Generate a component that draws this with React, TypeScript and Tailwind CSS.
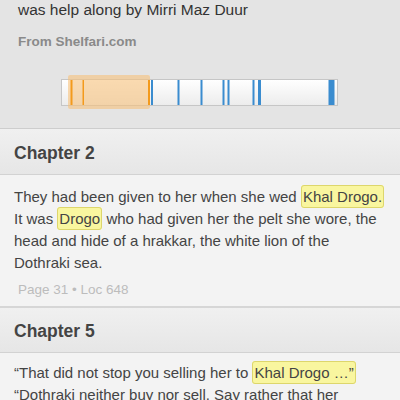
const Mark = ({ children }: { children: React.ReactNode }) => (
  <span className="rounded-[3px] border border-[#ddd66c] bg-[#f9f69f] px-[1px] py-[2px]">
    {children}
  </span>
);

function ProgressBar() {
  const blue = [
    { x: 93, w: 2 },
    { x: 119.5, w: 2 },
    { x: 142.5, w: 2 },
    { x: 164.5, w: 2 },
    { x: 169.5, w: 2 },
    { x: 194.5, w: 2 },
    { x: 200, w: 3 },
    { x: 270.5, w: 6 },
  ];
  const orange = [
    { x: 12.5, w: 2 },
    { x: 24.5, w: 1.5 },
    { x: 90, w: 2 },
  ];
  return (
    <svg width="284" height="38" viewBox="0 0 284 38" className="block">
      <defs>
        <linearGradient id="barFill" x1="0" y1="0" x2="0" y2="1">
          <stop offset="0" stopColor="#ffffff" />
          <stop offset="1" stopColor="#ececec" />
        </linearGradient>
      </defs>
      <rect x="3.5" y="5.5" width="276" height="26" fill="url(#barFill)" stroke="#c6c6c6" />
      {blue.map((b) => (
        <rect key={b.x} x={b.x} y="6" width={b.w} height="25" fill="#3a8ccf" />
      ))}
      <rect x="10" y="1" width="82" height="34" rx="2" fill="#f6c27c" opacity="0.6" />
      {orange.map((o) => (
        <rect key={o.x} x={o.x} y="6" width={o.w} height="25" fill="#f39a1c" />
      ))}
    </svg>
  );
}

export default function App() {
  return (
    <div className="h-[400px] w-[400px] overflow-hidden bg-[#f3f3f3] font-['Liberation_Sans',Arial,sans-serif]">
      <section className="h-[130px] border-b border-[#cdcdcd] bg-[#e4e4e4] px-[18px]">
        <p className="-mt-px text-[15.5px] leading-[22px] text-[#333]">
          was help along by Mirri Maz Duur
        </p>
        <p className="mt-3 text-[13.5px] font-bold leading-[18px] text-[#8a8a8a]">
          From Shelfari.com
        </p>
        <div className="ml-[40px] mt-[23px]">
          <ProgressBar />
        </div>
      </section>

      <div className="flex h-[46px] items-center border-b border-[#d2d2d2] bg-[linear-gradient(#f0f0f0,#e6e6e6)] px-[14px]">
        <h3 className="pt-[3px] text-[17.5px] font-bold text-[#444]">Chapter 2</h3>
      </div>
      <div className="border-b-2 border-[#d6d6d6] px-[14px] pb-[7px] pt-[11px]">
        <p className="whitespace-nowrap text-[15px] leading-[22px] text-[#444]">
          They had been given to her when she wed <Mark>Khal Drogo.</Mark>
          <br />
          It was <Mark>Drogo</Mark> who had given her the pelt she wore, the
          <br />
          head and hide of a hrakkar, the white lion of the
          <br />
          Dothraki sea.
        </p>
        <p className="ml-[4px] mt-[7px] text-[13.5px] leading-[18px] text-[#bcbcbc]">
          Page 31 • Loc 648
        </p>
      </div>

      <div className="flex h-[45px] items-center border-b border-[#d2d2d2] bg-[linear-gradient(#f0f0f0,#e6e6e6)] px-[14px]">
        <h3 className="pt-[3px] text-[17.5px] font-bold text-[#444]">Chapter 5</h3>
      </div>
      <div className="px-[14px] pt-[9px]">
        <p className="whitespace-nowrap text-[15px] leading-[22px] text-[#444]">
          “That did not stop you selling her to <Mark>Khal Drogo …”</Mark>
          <br />
          “Dothraki neither buy nor sell. Say rather that her
          <br />
          brother gave her.”
        </p>
      </div>
    </div>
  );
}
